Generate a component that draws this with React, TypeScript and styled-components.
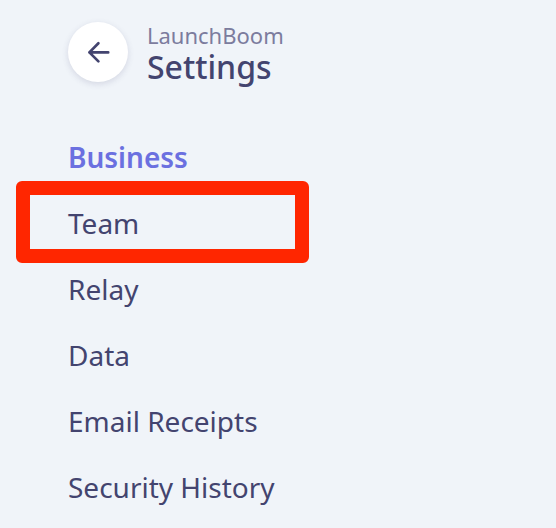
import React from "react";
import styled, { createGlobalStyle } from "styled-components";

const GlobalStyle = createGlobalStyle`
  * { box-sizing: border-box; }
  body {
    margin: 0;
    background: #f0f4f9;
    color: #43446f;
    font-family: "Noto Sans", sans-serif;
  }
`;

const Page = styled.main`
  min-height: 100vh;
  padding: 20px 16px 0;
`;

const Header = styled.header`
  display: flex;
  align-items: center;
  gap: 19px;
  padding-left: 52px;
`;

const BackButton = styled.button`
  display: flex;
  align-items: center;
  justify-content: center;
  width: 60px;
  height: 60px;
  padding: 0;
  border: 0;
  border-radius: 50%;
  background: #fff;
  color: #43446f;
  box-shadow: 0 2px 6px rgba(61, 64, 112, 0.16);
  cursor: pointer;
`;

const Company = styled.p`
  margin: 0;
  color: #7c7c9e;
  font-size: 22px;
  line-height: 30px;
`;

const Title = styled.h1`
  margin: 0;
  font-size: 32px;
  font-weight: 500;
  line-height: 34px;
`;

const Menu = styled.ul`
  margin: 31px 0 0;
  padding: 0;
  list-style: none;
`;

const MenuLink = styled.a<{ $active?: boolean; $outlined?: boolean }>`
  display: block;
  width: 293px;
  max-width: 100%;
  height: 82px;
  margin-bottom: -16px;
  padding: 0 0 0 38px;
  border: 14px solid ${(p) => (p.$outlined ? "#ff2600" : "transparent")};
  border-radius: 6px;
  color: ${(p) => (p.$active ? "#6b70e0" : "#43446f")};
  font-size: 28px;
  font-weight: ${(p) => (p.$active ? 600 : 400)};
  line-height: 56px;
  text-decoration: none;
  white-space: nowrap;
`;

const items = [
  { label: "Business", active: true },
  { label: "Team", outlined: true },
  { label: "Relay" },
  { label: "Data" },
  { label: "Email Receipts" },
  { label: "Security History" },
];

export default function App() {
  return (
    <Page>
      <GlobalStyle />
      <Header>
        <BackButton type="button" aria-label="Back">
          <svg width="24" height="24" viewBox="0 0 24 24" fill="none" stroke="currentColor" strokeWidth="2.7" strokeLinecap="round" strokeLinejoin="round">
            <path d="M22.2 12.4H3.4M12.4 3.3L3.4 12.4l9 9" />
          </svg>
        </BackButton>
        <div>
          <Company>LaunchBoom</Company>
          <Title>Settings</Title>
        </div>
      </Header>
      <nav aria-label="Settings">
        <Menu>
          {items.map((item) => (
            <li key={item.label}>
              <MenuLink
                href="#"
                aria-current={item.active ? "page" : undefined}
                $active={item.active}
                $outlined={item.outlined}
              >
                {item.label}
              </MenuLink>
            </li>
          ))}
        </Menu>
      </nav>
    </Page>
  );
}
